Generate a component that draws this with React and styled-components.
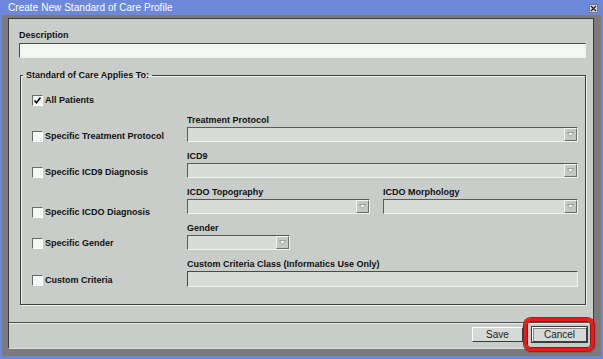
import React from 'react';
import styled, { createGlobalStyle } from 'styled-components';

const Global = createGlobalStyle`
  html, body { margin: 0; padding: 0; background: #b8b8b8; }
  body { font-family: "Liberation Sans", Arial, sans-serif; }
  * { box-sizing: border-box; }
`;

const Window = styled.div`
  width: 603px;
  height: 359px;
  background: #6d88db;
  display: flex;
  flex-direction: column;
  padding: 0 2px 3px 2px;
`;

const TitleBar = styled.div`
  height: 15px;
  flex: none;
  display: flex;
  align-items: center;
  justify-content: space-between;
  padding: 0 3px 0 6px;
`;

const Title = styled.span`
  color: #ffffff;
  font-size: 10px;
  line-height: 12px;
  letter-spacing: 0.05px;
`;

const CloseBox = styled.div`
  width: 9px;
  height: 9px;
  margin-top: 2px;
  background: #d8d8d8;
  border: 1px solid #7a7a7a;
  display: flex;
  align-items: center;
  justify-content: center;
`;

const Frame = styled.div`
  flex: 1;
  display: flex;
  background: #7b7b7b;
  padding: 3px 7px 7px 6px;
`;

const Panel = styled.div`
  flex: 1;
  display: flex;
  flex-direction: column;
  background: #c9cdc9;
  border: 1px solid #3c3c3c;
  border-bottom-color: #dcdcdc;
`;

const Content = styled.div`
  flex: 1;
  padding: 10px 7px 0 10px;
  display: flex;
  flex-direction: column;
`;

const Label = styled.div`
  font-size: 9px;
  font-weight: bold;
  line-height: 12px;
  color: #101010;
  white-space: nowrap;
`;

const TextInput = styled.div`
  height: ${p => (p.$disabled ? 16 : 15)}px;
  margin-top: ${p => (p.$disabled ? 0 : 2)}px;
  background: ${p => (p.$disabled ? '#d8dcd8' : '#f4f8f4')};
  border-top: 1px solid #4a4a4a;
  border-left: 1px solid #4a4a4a;
  border-right: 1px solid #eef2ee;
  border-bottom: 1px solid #eef2ee;
`;

const Group = styled.fieldset`
  margin: 11px 0 0 1px;
  padding: 13px 7px 17px 11px;
  border: 1px solid #3e3e3e;
  box-shadow: 1px 1px 0 #eef2ee, inset 1px 1px 0 #eef2ee;
  min-width: 0;
`;

const Legend = styled.legend`
  font-size: 9px;
  font-weight: bold;
  line-height: 12px;
  color: #101010;
  padding: 0 3px;
  margin-left: -9px;
`;

const Rows = styled.div`
  display: grid;
  grid-template-columns: 155px 1fr;
  row-gap: 8px;
`;

const CheckRow = styled.div`
  display: flex;
  align-items: center;
  gap: 2px;
  height: 12px;
  margin-top: ${p => p.$offset}px;
  margin-bottom: ${p => (p.$offset ? 16 - p.$offset : 0)}px;
  align-self: start;
`;

const Box = styled.div`
  width: 11px;
  height: 11px;
  flex: none;
  background: #f4f8f4;
  border-top: 1px solid #6a6a6a;
  border-left: 1px solid #6a6a6a;
  border-right: 1px solid #ffffff;
  border-bottom: 1px solid #ffffff;
  display: flex;
  align-items: center;
  justify-content: center;
`;

const CheckText = styled.span`
  font-size: 9px;
  font-weight: bold;
  line-height: 12px;
  color: #101010;
  white-space: nowrap;
`;

const Fields = styled.div`
  display: flex;
  gap: 13px;
`;

const Field = styled.div`
  display: flex;
  flex-direction: column;
  gap: 1px;
  width: ${p => (p.$w ? `${p.$w}px` : 'auto')};
  flex: ${p => (p.$w ? 'none' : '1')};
`;

const Combo = styled.div`
  height: 15px;
  background: #d8dcd8;
  border-top: 1px solid #5a5a5a;
  border-left: 1px solid #5a5a5a;
  border-right: 1px solid #f0f4f0;
  border-bottom: 1px solid #f0f4f0;
  display: flex;
  justify-content: flex-end;
  align-items: stretch;
`;

const Arrow = styled.div`
  width: 13px;
  background: #c4c8c4;
  border-top: 1px solid #f4f6f4;
  border-left: 1px solid #f4f6f4;
  border-right: 1px solid #6e6e6e;
  border-bottom: 1px solid #6e6e6e;
  display: flex;
  align-items: center;
  justify-content: center;
`;

const Footer = styled.div`
  flex: none;
  height: 26px;
  border-top: 1px solid #505050;
  box-shadow: inset 0 1px 0 #e6eae6;
  display: flex;
  justify-content: flex-end;
  align-items: flex-start;
  gap: 9px;
  padding: 4px 6px 0 0;
`;

const Button = styled.div`
  position: relative;
  width: ${p => p.$w}px;
  height: 15px;
  background: #d6dad6;
  border-top: 1px solid #ffffff;
  border-left: 1px solid #ffffff;
  border-right: 1px solid #3c3c3c;
  border-bottom: 1px solid #3c3c3c;
  ${p => p.$focus && 'outline: 1px solid #3c3c3c; box-shadow: inset 1px 1px 0 #8a8a8a;'}
  font-size: 10px;
  line-height: 13px;
  color: #222;
  text-align: center;
`;

const Highlight = styled.div`
  position: absolute;
  left: -9px;
  top: -10px;
  width: 70px;
  height: 33px;
  border: 3px solid #e41c1c;
  border-radius: 7px;
  box-shadow: inset 0 0 0 1px #a01010, 0 0 0 1px #b01818, 1px 1px 2px rgba(80, 0, 0, 0.5);
  pointer-events: none;
`;

const Tick = () => (
  <svg width="9" height="9" viewBox="0 0 9 9">
    <path d="M1.5 4.5 L3.5 6.8 L7.5 1.5" fill="none" stroke="#000" strokeWidth="1.6" />
  </svg>
);

const DownArrow = () => (
  <svg width="7" height="5" viewBox="0 0 7 5">
    <path d="M0.5 0.5 H6.5 L3.5 4.5 Z" fill="#ffffff" stroke="#8c8c8c" strokeWidth="0.8" />
  </svg>
);

const XIcon = () => (
  <svg width="7" height="7" viewBox="0 0 7 7">
    <path d="M1 1 L6 6 M6 1 L1 6" stroke="#222" strokeWidth="1.2" />
  </svg>
);

const Check = ({ label, checked, offset = 0 }) => (
  <CheckRow $offset={offset}>
    <Box>{checked && <Tick />}</Box>
    <CheckText>{label}</CheckText>
  </CheckRow>
);

const Dropdown = () => (
  <Combo>
    <Arrow>
      <DownArrow />
    </Arrow>
  </Combo>
);

export default function App() {
  return (
    <>
      <Global />
      <Window>
        <TitleBar>
          <Title>Create New Standard of Care Profile</Title>
          <CloseBox>
            <XIcon />
          </CloseBox>
        </TitleBar>
        <Frame>
          <Panel>
            <Content>
              <Label>Description</Label>
              <TextInput />
              <Group>
                <Legend>Standard of Care Applies To:</Legend>
                <Rows>
                  <Check label="All Patients" checked />
                  <div />
                  <Check label="Specific Treatment Protocol" offset={16} />
                  <Field>
                    <Label>Treatment Protocol</Label>
                    <Dropdown />
                  </Field>
                  <Check label="Specific ICD9 Diagnosis" offset={16} />
                  <Field>
                    <Label>ICD9</Label>
                    <Dropdown />
                  </Field>
                  <Check label="Specific ICDO Diagnosis" offset={20} />
                  <Fields>
                    <Field $w={183}>
                      <Label>ICDO Topography</Label>
                      <Dropdown />
                    </Field>
                    <Field>
                      <Label>ICDO Morphology</Label>
                      <Dropdown />
                    </Field>
                  </Fields>
                  <Check label="Specific Gender" offset={15} />
                  <Fields>
                    <Field $w={103}>
                      <Label>Gender</Label>
                      <Dropdown />
                    </Field>
                  </Fields>
                  <Check label="Custom Criteria" offset={16} />
                  <Field>
                    <Label>Custom Criteria Class (Informatics Use Only)</Label>
                    <TextInput $disabled />
                  </Field>
                </Rows>
              </Group>
            </Content>
            <Footer>
              <Button $w={51}>Save</Button>
              <Button $w={55} $focus>
                Cancel
                <Highlight />
              </Button>
            </Footer>
          </Panel>
        </Frame>
      </Window>
    </>
  );
}
